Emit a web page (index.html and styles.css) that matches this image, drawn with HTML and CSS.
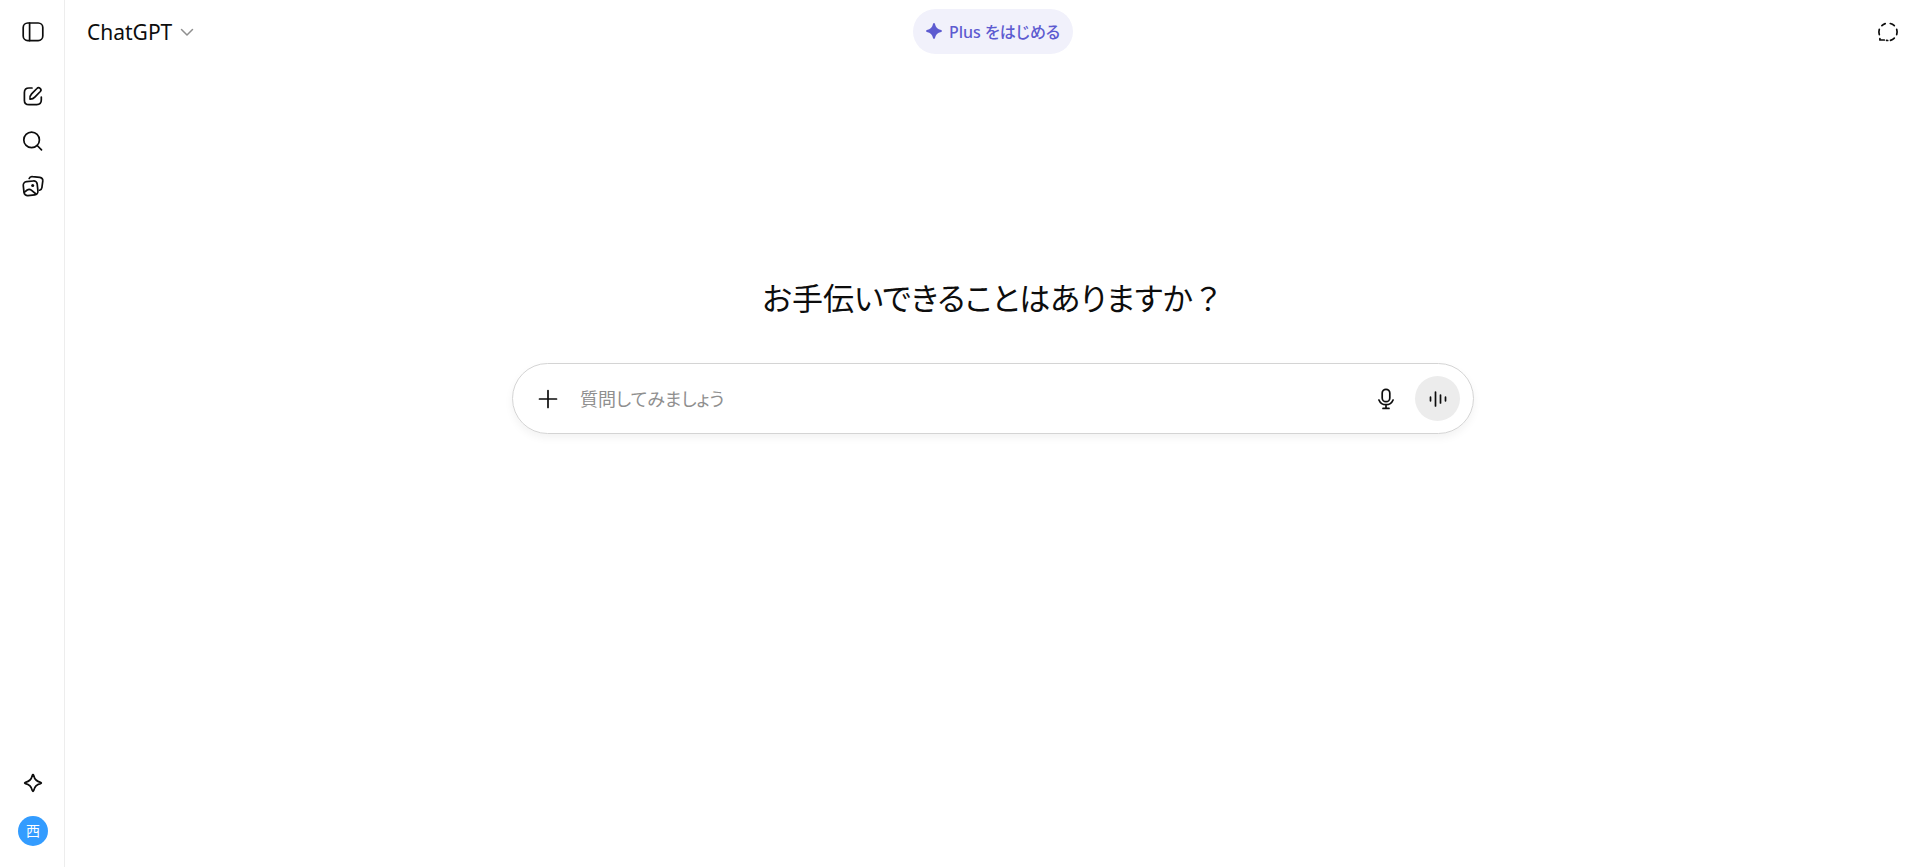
FILE: index.html
```html
<!DOCTYPE html>
<html lang="ja">
<head>
<meta charset="utf-8">
<title>ChatGPT</title>
<link rel="stylesheet" href="styles.css">
</head>
<body class="app">
<nav class="rail" aria-label="サイドバー">
  <button class="icon-btn rail-toggle" aria-label="サイドバーを開く">
    <svg class="icon" viewBox="0 0 22 22"><rect x="1.2" y="2" width="19.6" height="17.6" rx="4.6"/><path d="M7.6 2v17.6"/></svg>
  </button>
  <div class="rail-group">
    <button class="icon-btn" aria-label="新しいチャット">
      <svg class="icon" viewBox="0 0 22 22"><path d="M10 3H7Q2.400 3 2.400 7.600V15.400Q2.400 19.600 7 19.600H14.800Q19.300 19.600 19.300 15V12"/><path d="M8 14.200Q7.400 11.200 9.600 8.900L14.900 3.500A2.150 2.150 0 0 1 18.300 6.500L12.800 12.100Q10.800 14.400 8 14.200Z"/></svg>
    </button>
    <button class="icon-btn" aria-label="チャットを検索">
      <svg class="icon" viewBox="0 0 22 22"><circle cx="9.600" cy="9.900" r="7.800"/><path d="M15.200 15.500l4.300 4.300"/></svg>
    </button>
    <button class="icon-btn" aria-label="ライブラリ">
      <svg class="icon" viewBox="0 0 22 22"><rect x="1.600" y="6.300" width="14" height="14" rx="3.600" transform="rotate(-6 8.600 13.300)"/><path d="M7.200 3.500Q8 1.200 10.600 1.600L17.800 2.300Q21 2.800 20.800 5.900L19.900 12.600Q19.600 14.700 17.600 15.200"/><path d="M2.500 17.200L5.200 15Q7.300 13.600 9.300 15.200L14 19"/><circle class="solid" cx="10.700" cy="10.600" r="1.500"/></svg>
    </button>
  </div>
  <div class="rail-foot">
    <button class="icon-btn" aria-label="プランをアップグレード">
      <svg class="icon" viewBox="0 0 22 22"><path d="M11 2.700Q11.500 2.700 11.700 3.500C12.600 7.600 14.400 9.400 18.500 10.300Q20.200 11 18.500 11.700C14.400 12.600 12.600 14.400 11.700 18.500Q11 20.200 10.300 18.500C9.400 14.400 7.600 12.600 3.500 11.700Q1.800 11 3.500 10.300C7.600 9.400 9.400 7.600 10.300 3.500Q10.500 2.700 11 2.700Z"/></svg>
    </button>
    <button class="avatar" aria-label="プロフィール">西</button>
  </div>
</nav>
<main class="main">
  <header class="topbar">
    <button class="model">ChatGPT
      <svg class="chevron" viewBox="0 0 14 14"><path d="M1.500 4.500L7 10l5.500-5.500"/></svg>
    </button>
    <button class="plus">
      <svg class="spark" viewBox="0 0 16 16"><path d="M8 0Q8.800 0 9 .9C9.700 4.400 11.600 6.300 15.100 7Q16.900 8 15.100 9C11.600 9.700 9.700 11.600 9 15.100Q8 16.900 7 15.100C6.300 11.600 4.400 9.700 .9 9Q-.9 8 .9 7C4.400 6.300 6.300 4.400 7 .9Q7.200 0 8 0Z"/></svg>
      Plus をはじめる
    </button>
    <button class="icon-btn temp" aria-label="一時チャット">
      <svg class="icon" viewBox="0 0 22 22"><path d="M4.900 4.700Q6.300 3.300 8.200 2.600M13.300 2.500Q15.600 3 17.300 4.600M19.700 8.300Q20.500 11 19.700 13.600M17.300 17.200Q15.700 18.800 13.500 19.400M2.300 8.300Q1.500 11 2.300 13.600M2.900 17.500V19H7.300M9.600 19.300L10.700 19.500"/></svg>
    </button>
  </header>
  <section class="hero">
    <h1 class="title">お手伝いできることはありますか<span class="fullwidth">？</span></h1>
    <form class="composer">
      <button type="button" class="icon-btn" aria-label="ファイルを追加">
        <svg class="icon" viewBox="0 0 22 22"><path d="M11 2.500v17M2.500 11h17"/></svg>
      </button>
      <input class="prompt" type="text" aria-label="質問" placeholder="質問してみましょう">
      <button type="button" class="icon-btn" aria-label="音声入力">
        <svg class="icon" viewBox="0 0 22 22"><rect x="7.200" y="1.300" width="7.600" height="12.400" rx="3.800"/><path d="M3.900 12Q5.900 16.700 11 16.700T18.100 12M11 16.700v3.500M8 20.400h6"/></svg>
      </button>
      <button type="button" class="icon-btn voice" aria-label="音声モード">
        <svg class="icon" viewBox="0 0 22 22"><path d="M3.500 9.200v3.600M8.500 4v14M13.500 7v8M18.500 9.200v3.600"/></svg>
      </button>
    </form>
  </section>
</main>
</body>
</html>
```

FILE: styles.css
```css
* {
  box-sizing: border-box;
}

.app {
  display: flex;
  min-height: 100vh;
  margin: 0;
  background: #fff;
  color: #0d0d0d;
  font-family: "Noto Sans", "Noto Sans CJK JP", sans-serif;
  font-feature-settings: "palt";
}

button,
input {
  padding: 0;
  border: 0;
  background: none;
  color: inherit;
  font: inherit;
  font-feature-settings: inherit;
}

button {
  cursor: pointer;
}

.icon-btn {
  display: flex;
  flex: none;
  align-items: center;
  justify-content: center;
  width: 45px;
  height: 45px;
  border-radius: 50%;
}

.icon {
  width: 22px;
  height: 22px;
  fill: none;
  stroke: currentColor;
  stroke-width: 1.7;
  stroke-linecap: round;
  stroke-linejoin: round;
}

.icon .solid {
  fill: currentColor;
  stroke: none;
}

.rail {
  display: flex;
  flex: none;
  flex-direction: column;
  align-items: center;
  width: 65px;
  padding: 9px 0 21px 2px;
  border-right: 1px solid #ededed;
}

.rail-group {
  display: flex;
  flex-direction: column;
  margin-top: 19px;
}

.rail-foot {
  display: flex;
  flex-direction: column;
  align-items: center;
  gap: 11px;
  margin-top: auto;
}

.avatar {
  width: 30px;
  height: 30px;
  border-radius: 50%;
  background: #339cff;
  color: #fff;
  font-size: 14px;
  line-height: 30px;
}

.main {
  display: flex;
  flex: 1;
  flex-direction: column;
  min-width: 0;
  padding: 0 5px 0 11px;
}

.topbar {
  display: grid;
  grid-template-columns: 1fr auto 1fr;
  align-items: center;
  padding-top: 9px;
}

.model {
  display: flex;
  align-items: center;
  justify-self: start;
  gap: 8px;
  padding-left: 11px;
  font-size: 21px;
  line-height: 32px;
}

.chevron {
  width: 14px;
  height: 14px;
  fill: none;
  stroke: #8f8f8f;
  stroke-width: 1.5;
  stroke-linecap: round;
  stroke-linejoin: round;
}

.plus {
  display: flex;
  align-items: center;
  gap: 7px;
  height: 45px;
  padding: 0 13px 2px;
  border-radius: 24px;
  background: #f1f1fb;
  color: #5d5bd0;
  font-size: 16px;
  font-weight: 500;
}

.spark {
  width: 16px;
  height: 16px;
  fill: currentColor;
}

.temp {
  justify-self: end;
}

.hero {
  display: flex;
  flex-direction: column;
  align-items: center;
  padding-top: 220px;
}

.title {
  margin: 0 0 41px;
  font-size: 31px;
  font-weight: 400;
  line-height: 48px;
}

.fullwidth {
  font-feature-settings: normal;
}

.composer {
  display: flex;
  align-items: center;
  width: 100%;
  max-width: 962px;
  padding: 12px 13px 12px 12px;
  border: 1px solid #d4d4d4;
  border-radius: 36px;
  box-shadow: 0 4px 8px rgba(0, 0, 0, 0.05);
}

.prompt {
  flex: 1;
  min-width: 0;
  height: 45px;
  padding: 0 10px;
  outline: 0;
  font-size: 18px;
}

.prompt::placeholder {
  color: #8f8f8f;
  opacity: 1;
}

.voice {
  margin-left: 7px;
  background: #ececec;
}
```
